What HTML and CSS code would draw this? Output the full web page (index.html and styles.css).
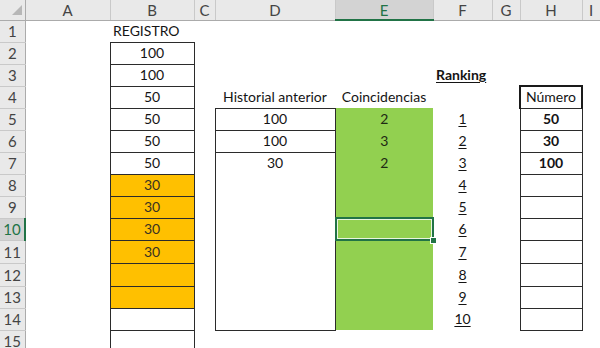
FILE: index.html
```html
<!DOCTYPE html>
<html lang="es">
<head>
<meta charset="utf-8">
<title>Hoja</title>
<link rel="stylesheet" href="styles.css">
</head>
<body>
<table class="sheet">
  <colgroup>
    <col class="w-rh"><col class="w-a"><col class="w-b"><col class="w-c"><col class="w-d"><col class="w-e"><col class="w-f"><col class="w-g"><col class="w-h"><col class="w-i">
  </colgroup>
  <tr class="hdr">
    <th class="corner"><svg class="tri" width="12" height="12" viewBox="0 0 12 12"><polygon points="11,1 11,11 1,11" fill="#b7b7b7"/></svg></th>
    <th class="col">A</th><th class="col">B</th><th class="col">C</th><th class="col">D</th><th class="col sel-col">E</th><th class="col">F</th><th class="col">G</th><th class="col">H</th><th class="col">I</th>
  </tr>
  <tr>
    <th class="row">1</th><td></td><td class="lft">REGISTRO</td><td></td><td></td><td></td><td></td><td></td><td></td><td></td>
  </tr>
  <tr>
    <th class="row">2</th><td></td><td class="bx">100</td><td></td><td></td><td></td><td></td><td></td><td></td><td></td>
  </tr>
  <tr>
    <th class="row">3</th><td></td><td class="bx">100</td><td></td><td></td><td></td><td class="lft title">Ranking</td><td></td><td></td><td></td>
  </tr>
  <tr>
    <th class="row">4</th><td></td><td class="bx">50</td><td></td><td class="ctr">Historial anterior</td><td class="ctr">Coincidencias</td><td></td><td></td><td class="bx thick">Número</td><td></td>
  </tr>
  <tr>
    <th class="row">5</th><td></td><td class="bx">50</td><td></td><td class="bx">100</td><td class="grn">2</td><td class="rank">1</td><td></td><td class="bx bold">50</td><td></td>
  </tr>
  <tr>
    <th class="row">6</th><td></td><td class="bx">50</td><td></td><td class="bx">100</td><td class="grn">3</td><td class="rank">2</td><td></td><td class="bx bold">30</td><td></td>
  </tr>
  <tr>
    <th class="row">7</th><td></td><td class="bx">50</td><td></td><td class="sides">30</td><td class="grn">2</td><td class="rank">3</td><td></td><td class="bx bold">100</td><td></td>
  </tr>
  <tr>
    <th class="row">8</th><td></td><td class="bx org">30</td><td></td><td class="sides"></td><td class="grn"></td><td class="rank">4</td><td></td><td class="bx"></td><td></td>
  </tr>
  <tr>
    <th class="row">9</th><td></td><td class="bx org">30</td><td></td><td class="sides"></td><td class="grn"></td><td class="rank">5</td><td></td><td class="bx"></td><td></td>
  </tr>
  <tr>
    <th class="row sel-row">10</th><td></td><td class="bx org">30</td><td></td><td class="sides"></td><td class="grn active"></td><td class="rank">6</td><td></td><td class="bx"></td><td></td>
  </tr>
  <tr class="tall">
    <th class="row">11</th><td></td><td class="bx org">30</td><td></td><td class="sides"></td><td class="grn"></td><td class="rank">7</td><td></td><td class="bx"></td><td></td>
  </tr>
  <tr class="tall">
    <th class="row">12</th><td></td><td class="bx org"></td><td></td><td class="sides"></td><td class="grn"></td><td class="rank">8</td><td></td><td class="bx"></td><td></td>
  </tr>
  <tr>
    <th class="row">13</th><td></td><td class="bx org"></td><td></td><td class="sides"></td><td class="grn"></td><td class="rank">9</td><td></td><td class="bx"></td><td></td>
  </tr>
  <tr>
    <th class="row">14</th><td></td><td class="bx"></td><td></td><td class="sides bottom"></td><td class="grn"></td><td class="rank">10</td><td></td><td class="bx"></td><td></td>
  </tr>
  <tr>
    <th class="row">15</th><td></td><td class="bx"></td><td></td><td></td><td></td><td></td><td></td><td></td><td></td>
  </tr>
</table>
</body>
</html>
```

FILE: styles.css
```css
html, body {
  margin: 0;
  padding: 0;
  background: #ffffff;
  overflow: hidden;
}

.sheet {
  border-collapse: collapse;
  border-spacing: 0;
  table-layout: fixed;
  width: 600px;
  font-family: Lato, "Liberation Sans", sans-serif;
  font-size: 14px;
  color: #141414;
}

.w-rh { width: 25px; }
.w-a { width: 85px; }
.w-b { width: 84px; }
.w-c { width: 21px; }
.w-d { width: 120px; }
.w-e { width: 98px; }
.w-f { width: 59px; }
.w-g { width: 28px; }
.w-h { width: 62px; }
.w-i { width: 18px; }

.sheet tr { height: 22px; }
.sheet tr.hdr { height: 20px; }
.sheet tr.tall { height: 23px; }

.sheet td {
  padding: 0 3px;
  text-align: center;
  vertical-align: middle;
  white-space: nowrap;
  overflow: visible;
  line-height: 16px;
}

.sheet th {
  padding: 0;
  font-weight: normal;
  background: #e9e9e9;
  color: #444444;
  font-size: 15px;
  line-height: 16px;
  text-align: center;
  vertical-align: middle;
}

.col {
  border-right: 1px solid #c9c9c9;
  border-bottom: 1px solid #ababab;
}

.row {
  border-right: 1px solid #ababab;
  border-bottom: 1px solid #c9c9c9;
}

.corner {
  position: relative;
  border-right: 1px solid #ababab;
  border-bottom: 1px solid #ababab;
}

.tri {
  display: block;
  margin: 4px 2px 3px auto;
}

.sel-col {
  background: #d3d3d3 !important;
  color: #217346 !important;
  border-bottom: 2px solid #217346 !important;
}

.sel-row {
  background: #d3d3d3 !important;
  color: #217346 !important;
  border-right: 2px solid #217346 !important;
}

.lft { text-align: left !important; }
.ctr { text-align: center; }

.bx { border: 1px solid #2b2b2b; }
.thick {
  border-top: 2px solid #1a1a1a;
  border-left: 2px solid #1a1a1a;
  border-right: 2px solid #1a1a1a;
}

.sides {
  border-left: 1px solid #2b2b2b;
  border-right: 1px solid #2b2b2b;
}
.bottom { border-bottom: 1px solid #2b2b2b; }

.org { background: #ffc000; color: #3a3320; }
.grn { background: #92d050; color: #1f2a14; }

.bold { font-weight: bold; }

.title {
  font-weight: bold;
  text-decoration: underline;
  text-underline-offset: 2px;
}

.rank {
  text-decoration: underline;
  text-underline-offset: 2px;
}

.active {
  position: relative;
}

.active::before {
  content: "";
  position: absolute;
  left: -1px;
  top: -1px;
  right: -1px;
  bottom: -1px;
  border: 2px solid #217346;
  box-shadow: inset 0 0 0 1px #e9f5df;
}

.active::after {
  content: "";
  position: absolute;
  right: -4px;
  bottom: -4px;
  width: 5px;
  height: 5px;
  background: #217346;
  border: 1px solid #ffffff;
}
```
